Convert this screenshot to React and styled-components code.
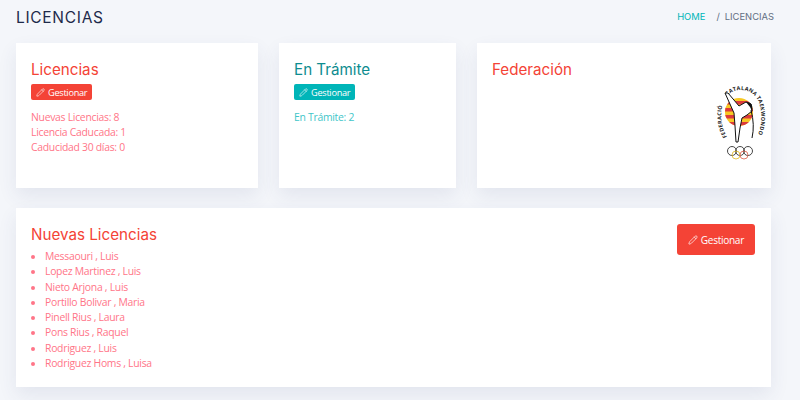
import React from "react"
import styled, { createGlobalStyle } from "styled-components"
import { Pencil } from "lucide-react"

const GlobalStyle = createGlobalStyle`
  html, body { margin: 0; padding: 0; height: 100%; }
  body {
    background: #f4f6fa;
    font-family: "Open Sans", "Liberation Sans", sans-serif;
    overflow: hidden;
  }
`

const RED = "#f44336"
const TEAL = "#00b5b8"
const PINK = "#ff7588"

const Page = styled.div`
  width: 800px;
  height: 400px;
  box-sizing: border-box;
  padding: 0 29px 0 16px;
  display: flex;
  flex-direction: column;
`

const Header = styled.header`
  height: 43px;
  display: flex;
  align-items: flex-start;
  justify-content: space-between;
`

const PageTitle = styled.h1`
  margin: 8px 0 0;
  font: 400 15.5px/20px Inter, "Liberation Sans", sans-serif;
  letter-spacing: 0.7px;
  color: #1e2a4a;
`

const Crumbs = styled.nav`
  margin: 10px -3px 0 0;
  display: flex;
  font: 400 9.4px/13px Inter, "Liberation Sans", sans-serif;
  color: #626e82;
`

const CrumbLink = styled.a`
  color: ${TEAL};
  margin-right: 11px;
`

const CrumbSeparator = styled.span`
  margin-right: 5px;
`

const TopRow = styled.section`
  display: grid;
  grid-template-columns: 242px 177px 294px;
  column-gap: 21px;
  margin-bottom: 20px;
`

const Card = styled.article`
  position: relative;
  height: ${(p) => p.$height}px;
  box-sizing: border-box;
  padding: 16px 15px;
  background: #fff;
  box-shadow: 0 8px 18px rgba(60, 72, 120, 0.09);
`

const CardTitle = styled.h2`
  margin: 0 0 5px;
  padding-top: 1px;
  height: 19px;
  font: 400 15.2px/20px Inter, "Liberation Sans", sans-serif;
  color: ${(p) => p.$color};
`

const Button = styled.a`
  display: flex;
  width: fit-content;
  align-items: center;
  box-sizing: border-box;
  gap: 3px;
  height: 16px;
  padding: 0 5px;
  border-radius: 2px;
  background: ${(p) => p.$color};
  color: #fff;
  font-size: 9.2px;
  letter-spacing: -0.28px;
`

const BigButton = styled(Button)`
  position: absolute;
  top: 16px;
  right: 16px;
  height: 31px;
  padding: 0 11px;
  gap: 3px;
  font-size: 10.1px;
  letter-spacing: -0.3px;
  border-radius: 3px;
`

const Stats = styled.div`
  margin-top: 10px;
  font-size: 10.4px;
  letter-spacing: -0.28px;
  line-height: 15.2px;
  color: ${(p) => p.$color};
`

const Names = styled.ul`
  margin: 0;
  padding: 0 0 0 14px;
  font-size: 10.4px;
  letter-spacing: -0.28px;
  line-height: 15.3px;
  color: ${PINK};
  list-style: none;
`

const Name = styled.li`
  position: relative;
  &::before {
    content: "";
    position: absolute;
    left: -14px;
    top: 6px;
    width: 4px;
    height: 4px;
    border-radius: 50%;
    background: ${PINK};
  }
`

const LogoSvg = styled.svg`
  position: absolute;
  right: 1px;
  top: 37px;
`

const LogoText = styled.text`
  font: 700 5.4px "Open Sans", sans-serif;
  letter-spacing: 0.3px;
  fill: #222;
`

const Logo = () => (
  <LogoSvg width="65" height="84" viewBox="0 0 65 84">
    <defs>
      <path id="arc" d="M22 57 C 12 40, 14 10, 36 10 C 58 10, 60 40, 52 57" />
      <clipPath id="disc">
        <circle cx="34" cy="32" r="14" />
      </clipPath>
    </defs>
    <g clipPath="url(#disc)">
      <rect x="18" y="16" width="32" height="32" fill="#f7c823" />
      <rect x="18" y="21" width="32" height="3.5" fill="#dc3a3c" />
      <rect x="18" y="28" width="32" height="3.5" fill="#dc3a3c" />
      <rect x="18" y="35" width="32" height="3.5" fill="#dc3a3c" />
      <rect x="18" y="42" width="32" height="3.5" fill="#dc3a3c" />
    </g>
    <LogoText>
      <textPath href="#arc">FEDERACIÓ</textPath>
    </LogoText>
    <LogoText>
      <textPath href="#arc" startOffset="37%">CATALANA</textPath>
    </LogoText>
    <LogoText>
      <textPath href="#arc" startOffset="65%">TAEKWONDO</textPath>
    </LogoText>
    <path
      d="M20 13 L23 13 L34 26 L41 22 L46 24 L47 31 L42 35 L37 38 L35 48 L33 62 L31 62 L30 46 L29 33 Z"
      fill="#fff"
      stroke="#111"
      strokeWidth="1"
      strokeLinejoin="round"
    />
    <path d="M41 22 Q49 22 47 31 L45 27 Z" fill="#111" />
    <path d="M46 30 Q50 45 47 58" fill="none" stroke="#111" strokeWidth="1" />
    <g fill="none" strokeWidth="0.9">
      <circle cx="27" cy="71" r="4.5" stroke="#333" />
      <circle cx="35" cy="71" r="4.5" stroke="#333" />
      <circle cx="43" cy="71" r="4.5" stroke="#333" />
      <circle cx="31" cy="75" r="4" stroke="#e7c23a" />
      <circle cx="39" cy="75" r="4" stroke="#e0705f" />
    </g>
  </LogoSvg>
)

const names = [
  "Messaouri , Luis",
  "Lopez Martinez , Luis",
  "Nieto Arjona , Luis",
  "Portillo Bolivar , Maria",
  "Pinell Rius , Laura",
  "Pons Rius , Raquel",
  "Rodriguez , Luis",
  "Rodriguez Homs , Luisa",
]

export default function App() {
  return (
    <Page>
      <GlobalStyle />
      <Header>
        <PageTitle>LICENCIAS</PageTitle>
        <Crumbs>
          <CrumbLink>HOME</CrumbLink>
          <CrumbSeparator>/</CrumbSeparator>
          <span>LICENCIAS</span>
        </Crumbs>
      </Header>
      <TopRow>
        <Card $height={145}>
          <CardTitle $color={RED}>Licencias</CardTitle>
          <Button $color={RED}>
            <Pencil size={9} strokeWidth={1.6} />
            Gestionar
          </Button>
          <Stats $color={PINK}>
            <div>Nuevas Licencias: 8</div>
            <div>Licencia Caducada: 1</div>
            <div>Caducidad 30 días: 0</div>
          </Stats>
        </Card>
        <Card $height={145}>
          <CardTitle $color="#0e8c8f">En Trámite</CardTitle>
          <Button $color={TEAL}>
            <Pencil size={9} strokeWidth={1.6} />
            Gestionar
          </Button>
          <Stats $color="#3fc6c9">
            <div>En Trámite: 2</div>
          </Stats>
        </Card>
        <Card $height={145}>
          <CardTitle $color={RED}>Federación</CardTitle>
          <Logo />
        </Card>
      </TopRow>
      <Card $height={179}>
        <CardTitle $color={RED}>Nuevas Licencias</CardTitle>
        <BigButton $color={RED}>
          <Pencil size={10} strokeWidth={1.6} />
          Gestionar
        </BigButton>
        <Names>
          {names.map((n) => (
            <Name key={n}>{n}</Name>
          ))}
        </Names>
      </Card>
    </Page>
  )
}
